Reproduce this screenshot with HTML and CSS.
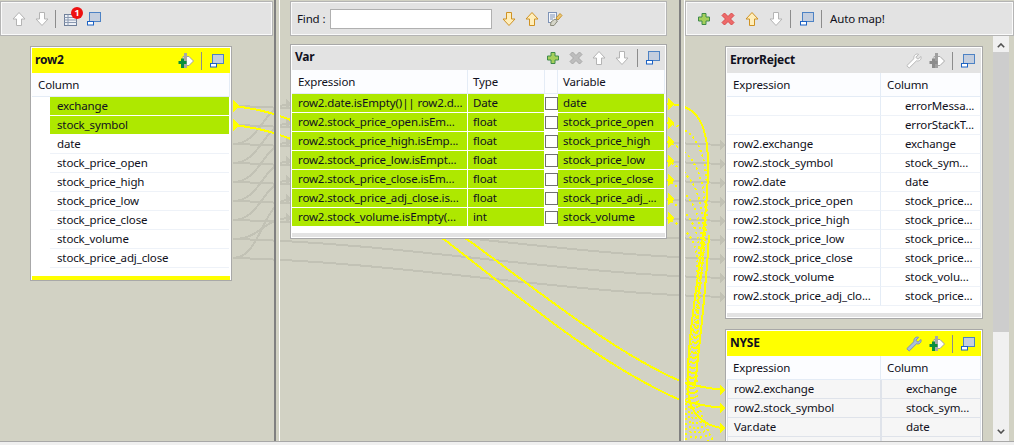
FILE: index.html
```html
<!DOCTYPE html>
<html lang="en">
<head>
  <meta charset="UTF-8" />
  <title>tMap editor</title>
  <link rel="stylesheet" href="styles.css">
</head>
<body>
  <svg class="defs" width="0" height="0">
    <defs>
      <symbol id="i-up" viewBox="0 0 16 16"><path d="M8 1.500 14 8H10.500V14.500H5.500V8H2Z" fill="#fff" stroke="#b4b4b4"/></symbol>
      <symbol id="i-down" viewBox="0 0 16 16"><path d="M8 14.500 14 8H10.500V1.500H5.500V8H2Z" fill="#fff" stroke="#b4b4b4"/></symbol>
      <symbol id="i-up-on" viewBox="0 0 16 16"><path d="M8 1.500 14 8H10.500V14.500H5.500V8H2Z" fill="#ffeebb" stroke="#cf9222"/></symbol>
      <symbol id="i-down-on" viewBox="0 0 16 16"><path d="M8 14.500 14 8H10.500V1.500H5.500V8H2Z" fill="#ffeebb" stroke="#cf9222"/></symbol>
      <symbol id="i-min" viewBox="0 0 16 16"><rect x="3.500" y="1.500" width="11" height="9" fill="#c4cede" stroke="#4d82c4"/><rect x="1.500" y="10.500" width="6" height="3.500" fill="#fff" stroke="#1c62c4"/></symbol>
      <symbol id="i-plus" viewBox="0 0 16 16"><path d="M6 2.500H10V6H13.500V10H10V13.500H6V10H2.500V6H6Z" fill="#a5cf5b" stroke="#3f8a4a"/></symbol>
      <symbol id="i-del" viewBox="0 0 16 16"><path d="M2 4.500 4.500 2 8 5.500 11.500 2 14 4.500 10.500 8 14 11.500 11.500 14 8 10.500 4.500 14 2 11.500 5.500 8Z" fill="#ee6a6a" stroke="#d84a4a"/></symbol>
      <symbol id="i-del-off" viewBox="0 0 16 16"><path d="M2 4.500 4.500 2 8 5.500 11.500 2 14 4.500 10.500 8 14 11.500 11.500 14 8 10.500 4.500 14 2 11.500 5.500 8Z" fill="#bdbdbd" stroke="#a8a8a8"/></symbol>
      <symbol id="i-wrench" viewBox="0 0 16 16"><path d="M15 3.500 12 6.200 9.800 4.300 12.600 1.300C10 .3 7.300 2.500 8 5.500L.8 12.700 3.200 15 10.500 7.800C13.300 8.700 15.800 6.300 15 3.500Z" fill="#fff" stroke="#b8b8b8"/></symbol>
      <symbol id="i-wrench-on" viewBox="0 0 16 16"><path d="M15 3.500 12 6.200 9.800 4.300 12.600 1.300C10 .3 7.300 2.500 8 5.500L.8 12.700 3.200 15 10.500 7.800C13.300 8.700 15.800 6.300 15 3.500Z" fill="#a9bedc" stroke="#7d92b4"/></symbol>
      <symbol id="i-add-on" viewBox="0 0 16 16"><path d="M8 3.500H11L15.500 8 11 12.500H5V3.500Z" fill="#fff" stroke="#a0a0a0"/><rect x="6" y="0" width="3" height="15" fill="#a8a8a8"/><path d="M3 5.500H6V8H8.500V11H6V15H3V11H.5V8H3Z" fill="#0b8f3c"/></symbol>
      <symbol id="i-add-off" viewBox="0 0 16 16"><path d="M8 3.500H11L15.500 8 11 12.500H5V3.500Z" fill="#fff" stroke="#a8a8a8"/><rect x="6" y="0" width="3" height="15" fill="#a0a0a0"/><path d="M3 5.500H6V8H8.500V11H6V15H3V11H.5V8H3Z" fill="#8c8c8c"/></symbol>
      <symbol id="i-find" viewBox="0 0 16 16"><rect x="1.500" y="1.500" width="8" height="10" fill="#f4f6fa" stroke="#7e93b6"/><path d="M3 4H8M3 6H8M3 8H6" stroke="#7e93b6"/><path d="M9 7 13 2.500 15 4.500 11 9Z" fill="#f1c76f" stroke="#c49433"/><path d="M4 11 8 8 10.500 10 7 14.500H3.500Z" fill="#d5d5c8" stroke="#8c8c7c"/></symbol>
      <symbol id="i-notes" viewBox="0 0 16 16"><rect x="1.500" y="3.500" width="12" height="11" fill="#eef1f6" stroke="#6f7f99"/><path d="M1.500 6.500H13.500M1.500 9H13.500M1.500 11.500H13.500M5 3.500V14.500" stroke="#8b9ab2"/></symbol>
    </defs>
  </svg>

  <div class="editor">
    <!-- connection lines sit behind tables, sashes hide them -->
    <svg class="links" width="1014" height="441" viewBox="0 0 1014 441">
      <g class="gray">
        <path d="M233 144C262 144 262 104 291 104"/>
        <path d="M233 163C262 163 262 123 291 123"/>
        <path d="M233 182C262 182 262 142 291 142"/>
        <path d="M233 201C262 201 262 161 291 161"/>
        <path d="M233 220C262 220 262 180 291 180"/>
        <path d="M233 258C262 258 262 199 291 199"/>
        <path d="M233 239C262 239 262 218 291 218"/>
        <path d="M233 106C400 110 560 141 725 145"/>
        <path d="M233 125C400 129 560 160 725 164"/>
        <path d="M233 144C400 148 560 179 725 183"/>
        <path d="M233 163C400 167 560 198 725 202"/>
        <path d="M233 182C400 186 560 217 725 221"/>
        <path d="M233 201C400 205 560 236 725 240"/>
        <path d="M233 220C400 224 560 255 725 259"/>
        <path d="M233 239C400 243 560 274 725 278"/>
        <path d="M233 258C400 262 560 293 725 297"/>
      </g>
      <g class="gray-head">
        <path d="M720 140 725 145 720 150Z"/>
        <path d="M720 159 725 164 720 169Z"/>
        <path d="M720 178 725 183 720 188Z"/>
        <path d="M720 197 725 202 720 207Z"/>
        <path d="M720 216 725 221 720 226Z"/>
        <path d="M720 235 725 240 720 245Z"/>
        <path d="M720 254 725 259 720 264Z"/>
        <path d="M720 273 725 278 720 283Z"/>
        <path d="M720 292 725 297 720 302Z"/>
        <path d="M286 99 291 104 286 109Z"/>
        <path d="M286 118 291 123 286 128Z"/>
        <path d="M286 137 291 142 286 147Z"/>
        <path d="M286 156 291 161 286 166Z"/>
        <path d="M286 175 291 180 286 185Z"/>
        <path d="M286 194 291 199 286 204Z"/>
        <path d="M286 213 291 218 286 223Z"/>
      </g>
      <g class="flow">
        <path d="M233 106C260 109 275 114 291 120L468 240C540 292 610 350 680 381C695 386 710 389 725 390"/>
        <path d="M233 125C260 128 275 133 291 139L445 240C520 298 600 365 680 400C695 404 710 407 725 408"/>
        <path d="M667 104C695 104 708 120 708 165C708 240 685 330 688 392C690 415 705 426 722 428"/>
        <path d="M709 235C706 290 700 340 695 385"/>
      </g>
      <g class="dots">
        <path d="M667 123C695 128 706 150 707 190C708 260 690 330 687 385C686 410 686 430 686 445"/>
        <path d="M667 142C690 150 704 170 705 210C706 270 692 330 689 385C688 410 690 430 692 445"/>
        <path d="M667 161C688 170 702 190 703 225C704 280 694 335 691 385C690 410 694 430 698 445"/>
        <path d="M667 180C685 190 700 205 701 240C702 290 696 335 693 385C692 410 698 430 704 445"/>
        <path d="M667 199C682 208 698 220 699 250C700 295 697 335 695 385C694 405 702 430 710 445"/>
        <path d="M667 218C680 225 696 235 697 260C698 300 698 340 697 385C696 405 706 430 716 445"/>
      </g>
      <g class="head">
        <path d="M233 100 239 106 233 112Z"/>
        <path d="M233 119 239 125 233 131Z"/>
        <path d="M668 98 674 104 668 110Z"/>
        <path d="M668 117 674 123 668 129Z"/>
        <path d="M668 136 674 142 668 148Z"/>
        <path d="M668 155 674 161 668 167Z"/>
        <path d="M668 174 674 180 668 186Z"/>
        <path d="M668 193 674 199 668 205Z"/>
        <path d="M668 212 674 218 668 224Z"/>
        <path d="M720 385 725 390 720 395Z"/>
        <path d="M720 403 725 408 720 413Z"/>
        <path d="M720 423 725 428 720 433Z"/>
      </g>
    </svg>

    <section class="zone zone-in">
      <div class="toolbar">
        <svg class="ico"><use href="#i-up"/></svg>
        <svg class="ico"><use href="#i-down"/></svg>
        <span class="sep"></span>
        <span class="badged">
          <svg class="ico"><use href="#i-notes"/></svg>
          <span class="badge">1</span>
        </span>
        <svg class="ico"><use href="#i-min"/></svg>
      </div>
      <div class="panel panel-row2">
        <div class="panel-head active">
          <b>row2</b>
          <span class="tools">
            <svg class="ico"><use href="#i-add-on"/></svg>
            <span class="sep"></span>
            <svg class="ico"><use href="#i-min"/></svg>
          </span>
        </div>
        <div class="col-head in-cols"><span>Column</span></div>
        <div class="row in-row sel"><span>exchange</span></div>
        <div class="row in-row sel"><span>stock_symbol</span></div>
        <div class="row in-row"><span>date</span></div>
        <div class="row in-row"><span>stock_price_open</span></div>
        <div class="row in-row"><span>stock_price_high</span></div>
        <div class="row in-row"><span>stock_price_low</span></div>
        <div class="row in-row"><span>stock_price_close</span></div>
        <div class="row in-row"><span>stock_volume</span></div>
        <div class="row in-row"><span>stock_price_adj_close</span></div>
        <div class="foot-yellow"></div>
      </div>
    </section>

    <div class="sash"></div>

    <section class="zone zone-var">
      <div class="toolbar find-bar">
        <label class="find-label" for="find">Find :</label>
        <input class="find-input" id="find" type="text" />
        <svg class="ico"><use href="#i-down-on"/></svg>
        <svg class="ico"><use href="#i-up-on"/></svg>
        <svg class="ico"><use href="#i-find"/></svg>
      </div>
      <div class="panel panel-var">
        <div class="panel-head">
          <b>Var</b>
          <span class="tools">
            <svg class="ico"><use href="#i-plus"/></svg>
            <svg class="ico"><use href="#i-del-off"/></svg>
            <svg class="ico"><use href="#i-up"/></svg>
            <svg class="ico"><use href="#i-down"/></svg>
            <span class="sep"></span>
            <svg class="ico"><use href="#i-min"/></svg>
          </span>
        </div>
        <div class="col-head var-cols"><span>Expression</span><span>Type</span><span></span><span>Variable</span></div>
        <div class="row var-cols"><span>row2.date.isEmpty()|| row2.d...</span><span>Date</span><i class="check"></i><span>date</span></div>
        <div class="row var-cols"><span>row2.stock_price_open.isEm...</span><span>float</span><i class="check"></i><span>stock_price_open</span></div>
        <div class="row var-cols"><span>row2.stock_price_high.isEmp...</span><span>float</span><i class="check"></i><span>stock_price_high</span></div>
        <div class="row var-cols"><span>row2.stock_price_low.isEmpt...</span><span>float</span><i class="check"></i><span>stock_price_low</span></div>
        <div class="row var-cols"><span>row2.stock_price_close.isEm...</span><span>float</span><i class="check"></i><span>stock_price_close</span></div>
        <div class="row var-cols"><span>row2.stock_price_adj_close.is...</span><span>float</span><i class="check"></i><span>stock_price_adj_...</span></div>
        <div class="row var-cols"><span>row2.stock_volume.isEmpty(...</span><span>int</span><i class="check"></i><span>stock_volume</span></div>
        <div class="foot-gray"></div>
      </div>
    </section>

    <div class="sash"></div>

    <section class="zone zone-out">
      <div class="toolbar">
        <svg class="ico"><use href="#i-plus"/></svg>
        <svg class="ico"><use href="#i-del"/></svg>
        <svg class="ico"><use href="#i-up-on"/></svg>
        <svg class="ico"><use href="#i-down"/></svg>
        <span class="sep"></span>
        <svg class="ico"><use href="#i-min"/></svg>
        <span class="sep"></span>
        <span class="auto-map">Auto map!</span>
      </div>
      <div class="out-body">
        <div class="out-list">
          <div class="panel panel-out">
            <div class="panel-head">
              <b>ErrorReject</b>
              <span class="tools">
                <svg class="ico"><use href="#i-wrench"/></svg>
                <svg class="ico"><use href="#i-add-off"/></svg>
                <span class="sep"></span>
                <svg class="ico"><use href="#i-min"/></svg>
              </span>
            </div>
            <div class="col-head out-cols"><span>Expression</span><span>Column</span></div>
            <div class="row out-cols"><span></span><span>errorMessa...</span></div>
            <div class="row out-cols"><span></span><span>errorStackT...</span></div>
            <div class="row out-cols"><span>row2.exchange</span><span>exchange</span></div>
            <div class="row out-cols"><span>row2.stock_symbol</span><span>stock_sym...</span></div>
            <div class="row out-cols"><span>row2.date</span><span>date</span></div>
            <div class="row out-cols"><span>row2.stock_price_open</span><span>stock_price...</span></div>
            <div class="row out-cols"><span>row2.stock_price_high</span><span>stock_price...</span></div>
            <div class="row out-cols"><span>row2.stock_price_low</span><span>stock_price...</span></div>
            <div class="row out-cols"><span>row2.stock_price_close</span><span>stock_price...</span></div>
            <div class="row out-cols"><span>row2.stock_volume</span><span>stock_volu...</span></div>
            <div class="row out-cols"><span>row2.stock_price_adj_clo...</span><span>stock_price...</span></div>
            <div class="foot-gray"></div>
          </div>
          <div class="panel panel-out panel-nyse">
            <div class="panel-head active">
              <b>NYSE</b>
              <span class="tools">
                <svg class="ico"><use href="#i-wrench-on"/></svg>
                <svg class="ico"><use href="#i-add-on"/></svg>
                <span class="sep"></span>
                <svg class="ico"><use href="#i-min"/></svg>
              </span>
            </div>
            <div class="col-head out-cols"><span>Expression</span><span>Column</span></div>
            <div class="row out-cols boxed"><span>row2.exchange</span><span>exchange</span></div>
            <div class="row out-cols boxed"><span>row2.stock_symbol</span><span>stock_sym...</span></div>
            <div class="row out-cols boxed"><span>Var.date</span><span>date</span></div>
            <div class="row out-cols boxed"><span></span><span></span></div>
          </div>
        </div>
        <div class="scrollbar">
          <svg class="chev" width="8" height="5" viewBox="0 0 8 5"><path d="M.8 4.200 4 1 7.200 4.200" fill="none" stroke="#505050" stroke-width="1.600"/></svg>
          <span class="thumb"></span>
          <svg class="chev chev-down" width="8" height="5" viewBox="0 0 8 5"><path d="M.8 .8 4 4 7.200 .8" fill="none" stroke="#505050" stroke-width="1.600"/></svg>
        </div>
      </div>
    </section>
  </div>
  <div class="status"></div>
</body>
</html>
```

FILE: styles.css
```css
* {
  box-sizing: border-box;
}
html, body {
  margin: 0;
  height: 445px;
  overflow: hidden;
}
body {
  font-family: "Noto Sans", sans-serif;
  font-size: 11.5px;
  letter-spacing: -0.14px;
  color: #101020;
  background: #f0f0f0;
}
.defs {
  position: absolute;
}
.editor {
  position: relative;
  display: flex;
  height: 441px;
  background: #d2d2c4;
}
.links {
  position: absolute;
  left: 0;
  top: 0;
  shape-rendering: crispEdges;
}
.links path {
  fill: none;
}
.gray path {
  stroke: #c2c2b5;
  stroke-width: 2;
}
.links .gray-head path {
  fill: #c2c2b5;
}
.flow path {
  stroke: #ffff00;
  stroke-width: 2;
}
.dots path {
  stroke: #ffff00;
  stroke-width: 2;
  stroke-dasharray: 2 3;
}
.links .head path {
  fill: #ffff00;
}

.zone {
  position: relative;
  overflow: hidden;
}
.zone-in {
  width: 274px;
}
.zone-var {
  width: 399px;
  padding: 0 12px 0 10px;
}
.zone-out {
  width: 329px;
  flex: 1;
}
.sash {
  position: relative;
  width: 6px;
  background: #d2d2c4;
  border-left: 2px solid #808080;
  border-right: 1px solid #fff;
}

.toolbar {
  display: flex;
  align-items: center;
  gap: 7px;
  height: 35px;
  margin-top: 1px;
  padding-left: 10px;
  background: #e3e3e3;
  border: 1px solid #b4b4b4;
  box-shadow: inset 0 0 0 1px #fafafa;
}
.zone-in .toolbar {
  width: 273px;
}
.zone-in .toolbar .sep {
  margin-left: -2px;
}
.zone-out .toolbar {
  gap: 8px;
}
.zone-out .toolbar .sep {
  margin-left: -2px;
}
.ico {
  display: block;
  width: 16px;
  height: 16px;
  flex: none;
}
.sep {
  width: 1px;
  height: 18px;
  background: #8c8c8c;
  flex: none;
}
.badged {
  position: relative;
}
.badge {
  position: absolute;
  right: -4px;
  top: -4px;
  width: 12px;
  height: 12px;
  border-radius: 50%;
  background: #ee1111;
  color: #fff;
  font-size: 9px;
  font-weight: 700;
  line-height: 12px;
  text-align: center;
}
.find-bar {
  gap: 7px;
  padding-left: 6px;
}
.find-label {
  margin-right: -2px;
}
.find-input {
  width: 162px;
  height: 20px;
  border: 1px solid #b0b0b0;
  background: #fff;
  margin-right: 2px;
}

.panel {
  position: relative;
  background: #fff;
  border: 1px solid #a8a8a8;
  padding: 1px 1px 0;
}
.panel-row2 {
  width: 202px;
  height: 235px;
  margin: 10px 0 0 30px;
}
.panel-var {
  width: 377px;
  height: 195px;
  margin: 8px 0 0;
}
.panel-out {
  width: 258px;
  height: 273px;
  margin-top: 10px;
}
.panel-nyse {
  height: 130px;
}
.panel-head {
  display: flex;
  align-items: center;
  justify-content: space-between;
  height: 25px;
  padding: 0 5px 0 3px;
  background: #e3e3e3;
}
.panel-head b {
  padding-bottom: 3px;
  letter-spacing: -0.2px;
  font-size: 12px;
}
.panel-row2 .panel-head b {
  padding-bottom: 2px;
}
.panel-var .panel-head {
  height: 24px;
  padding-right: 4px;
}
.panel-head.active {
  background: #ffff00;
}
.tools {
  display: flex;
  align-items: center;
  gap: 7px;
}
.col-head,
.row {
  display: grid;
  height: 19px;
  line-height: 18px;
}
.col-head {
  height: 24px;
  line-height: 23px;
  background: #fcfdff;
  border-bottom: 1px solid #e4ecf6;
}
.col-head span {
  padding-left: 6px;
  border-right: 1px solid #e4ecf6;
  overflow: hidden;
  white-space: nowrap;
}
.row span {
  overflow: hidden;
  white-space: nowrap;
  border-bottom: 1px solid #eef2f8;
  border-right: 1px solid #e4ecf6;
}
.in-cols {
  grid-template-columns: 1fr;
}
.in-row {
  grid-template-columns: 1fr;
  padding: 0 1px 0 18px;
}
.in-row span {
  padding-left: 7px;
  border-right: 0;
}
.in-row.sel span {
  background: #aee800;
  border-bottom: 1px solid #fff;
}
.foot-yellow {
  position: absolute;
  left: 1px;
  right: 1px;
  bottom: 0;
  height: 4px;
  background: #ffff00;
}
.foot-gray {
  position: absolute;
  left: 1px;
  right: 1px;
  bottom: 1px;
  height: 4px;
  background: #e3e3e3;
}
.var-cols {
  grid-template-columns: 176px 77px 13px 1fr;
}
.panel-var .row span {
  padding-left: 6px;
  background: #aee800;
  border-bottom: 1px solid #fff;
  border-right: 1px solid #fff;
}
.var-cols span + span,
.panel-var .row span + span,
.panel-var .row i + span {
  padding-left: 5px;
}
.check {
  display: block;
  width: 13px;
  height: 13px;
  margin-top: 3px;
  background: #fff;
  border: 1px solid #707070;
}
.out-body {
  display: flex;
  justify-content: space-between;
  height: 405px;
}
.out-list {
  padding-left: 40px;
  position: relative;
}
.out-cols {
  grid-template-columns: 154px 1fr;
}
.row.out-cols span {
  padding-left: 6px;
}
.row.out-cols span + span {
  padding-left: 24px;
}
.boxed span {
  background: #f6f6f6;
  border: 1px solid #dfe3ea;
  border-top: 0;
}
.scrollbar {
  position: relative;
  width: 16px;
  margin-right: 5px;
  background: #f0f0f0;
}
.thumb {
  position: absolute;
  left: 0;
  right: 0;
  top: 16px;
  height: 280px;
  background: #cdcdcd;
}
.chev {
  position: absolute;
  left: 4px;
  top: 7px;
}
.chev-down {
  top: auto;
  bottom: 7px;
}
.status {
  height: 4px;
  border-top: 1px solid #a8a8a8;
}
```
